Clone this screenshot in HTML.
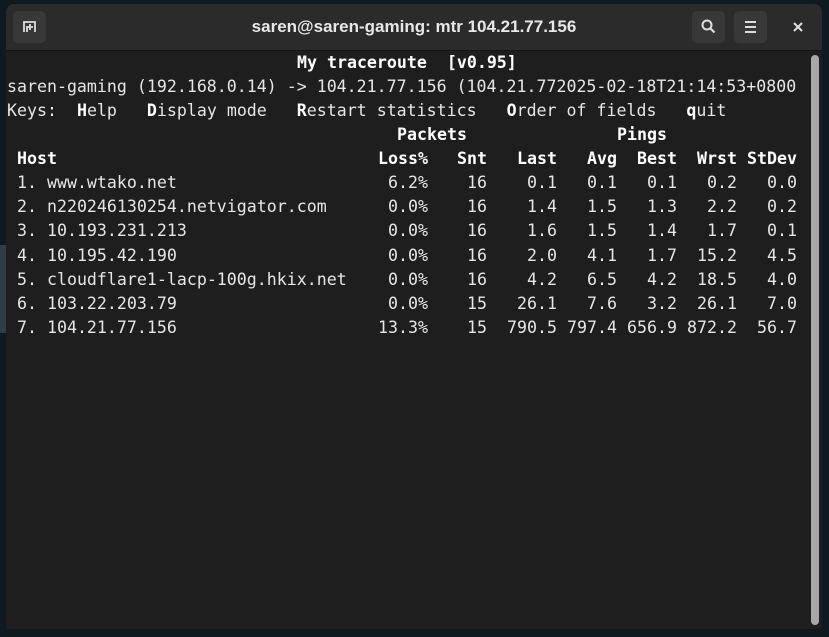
<!DOCTYPE html>
<html><head><meta charset="utf-8"><style>
html,body{margin:0;padding:0}
body{width:829px;height:637px;background:#0e1a20;position:relative;overflow:hidden;font-family:"DejaVu Sans Mono","Liberation Mono",monospace}
.strip{position:absolute;left:0;top:245px;width:6px;height:88px;background:#2e3e48}
.win{position:absolute;left:6px;top:4px;width:816px;height:625px;background:#1e1e1e;border-radius:8px 8px 0 0;overflow:hidden}
.tb{position:absolute;left:0;top:0;width:816px;height:46px;background:#2b2b2b;border-bottom:1px solid #151515}
.title{position:absolute;left:0;width:816px;top:13px;text-align:center;color:#e8e8e8;font:bold 17px "Liberation Sans",sans-serif}
.btn{position:absolute;top:7px;width:33px;height:32px;background:#383838;border-radius:5px}
.sb{position:absolute;left:805px;top:51px;width:8px;height:570px;background:#a8a8a8;border-radius:4px}
.t{position:absolute;color:#e6e6e6;font-size:16.6px;white-space:pre;line-height:24.2px}
.b{font-weight:bold;color:#fff}
</style></head><body>
<div class="strip"></div>
<div class="win">
 <div class="tb">
  <div class="btn" style="left:7px"><svg width="33" height="32" viewBox="0 0 33 32"><path d="M11 21V11h11v10M14 21V15M17 13v6M14 16h6" stroke="#ddd" stroke-width="1.8" fill="none"/></svg></div>
  <div class="title">saren@saren-gaming: mtr 104.21.77.156</div>
  <div class="btn" style="left:686px"><svg width="33" height="32" viewBox="0 0 33 32"><circle cx="15" cy="14" r="4.5" stroke="#ddd" stroke-width="2" fill="none"/><path d="M18.5 17.5l4 4" stroke="#ddd" stroke-width="2.2"/></svg></div>
  <div class="btn" style="left:728px"><svg width="33" height="32" viewBox="0 0 33 32"><path d="M11 11h11M11 16h11M11 21h11" stroke="#ddd" stroke-width="2"/></svg></div>
  <svg style="position:absolute;left:786px;top:17px" width="12" height="12" viewBox="0 0 12 12"><path d="M2 2l8 8M10 2l-8 8" stroke="#ddd" stroke-width="2"/></svg>
 </div>
 <div class="sb"></div>
</div>
<div class="t b" style="left:297px;top:51px">My traceroute  [v0.95]</div>
<div class="t" style="left:7px;top:75px">saren-gaming (192.168.0.14) -&gt; 104.21.77.156 (104.21.772025-02-18T21:14:53+0800</div>
<div class="t" style="left:7px;top:99px">Keys:  <span class="b">H</span>elp   <span class="b">D</span>isplay mode   <span class="b">R</span>estart statistics   <span class="b">O</span>rder of fields   <span class="b">q</span>uit</div>
<div class="t b" style="left:397px;top:123px">Packets</div>
<div class="t b" style="left:617px;top:123px">Pings</div>

<div class="t b" style="left:17px;top:147px">Host</div>
<div class="t b" style="left:17px;top:147px;width:411px;text-align:right">Loss%</div>
<div class="t b" style="left:17px;top:147px;width:470px;text-align:right">Snt</div>
<div class="t b" style="left:17px;top:147px;width:540px;text-align:right">Last</div>
<div class="t b" style="left:17px;top:147px;width:600px;text-align:right">Avg</div>
<div class="t b" style="left:17px;top:147px;width:660px;text-align:right">Best</div>
<div class="t b" style="left:17px;top:147px;width:720px;text-align:right">Wrst</div>
<div class="t b" style="left:17px;top:147px;width:780px;text-align:right">StDev</div>

<div class="t" style="left:17px;top:171px">1. www.wtako.net
2. n220246130254.netvigator.com
3. 10.193.231.213
4. 10.195.42.190
5. cloudflare1-lacp-100g.hkix.net
6. 103.22.203.79
7. 104.21.77.156</div>

<div class="t" style="left:17px;top:171px;width:411px;text-align:right">6.2%
0.0%
0.0%
0.0%
0.0%
0.0%
13.3%</div>
<div class="t" style="left:17px;top:171px;width:470px;text-align:right">16
16
16
16
16
15
15</div>
<div class="t" style="left:17px;top:171px;width:540px;text-align:right">0.1
1.4
1.6
2.0
4.2
26.1
790.5</div>
<div class="t" style="left:17px;top:171px;width:600px;text-align:right">0.1
1.5
1.5
4.1
6.5
7.6
797.4</div>
<div class="t" style="left:17px;top:171px;width:660px;text-align:right">0.1
1.3
1.4
1.7
4.2
3.2
656.9</div>
<div class="t" style="left:17px;top:171px;width:720px;text-align:right">0.2
2.2
1.7
15.2
18.5
26.1
872.2</div>
<div class="t" style="left:17px;top:171px;width:780px;text-align:right">0.0
0.2
0.1
4.5
4.0
7.0
56.7</div>
</body></html>
